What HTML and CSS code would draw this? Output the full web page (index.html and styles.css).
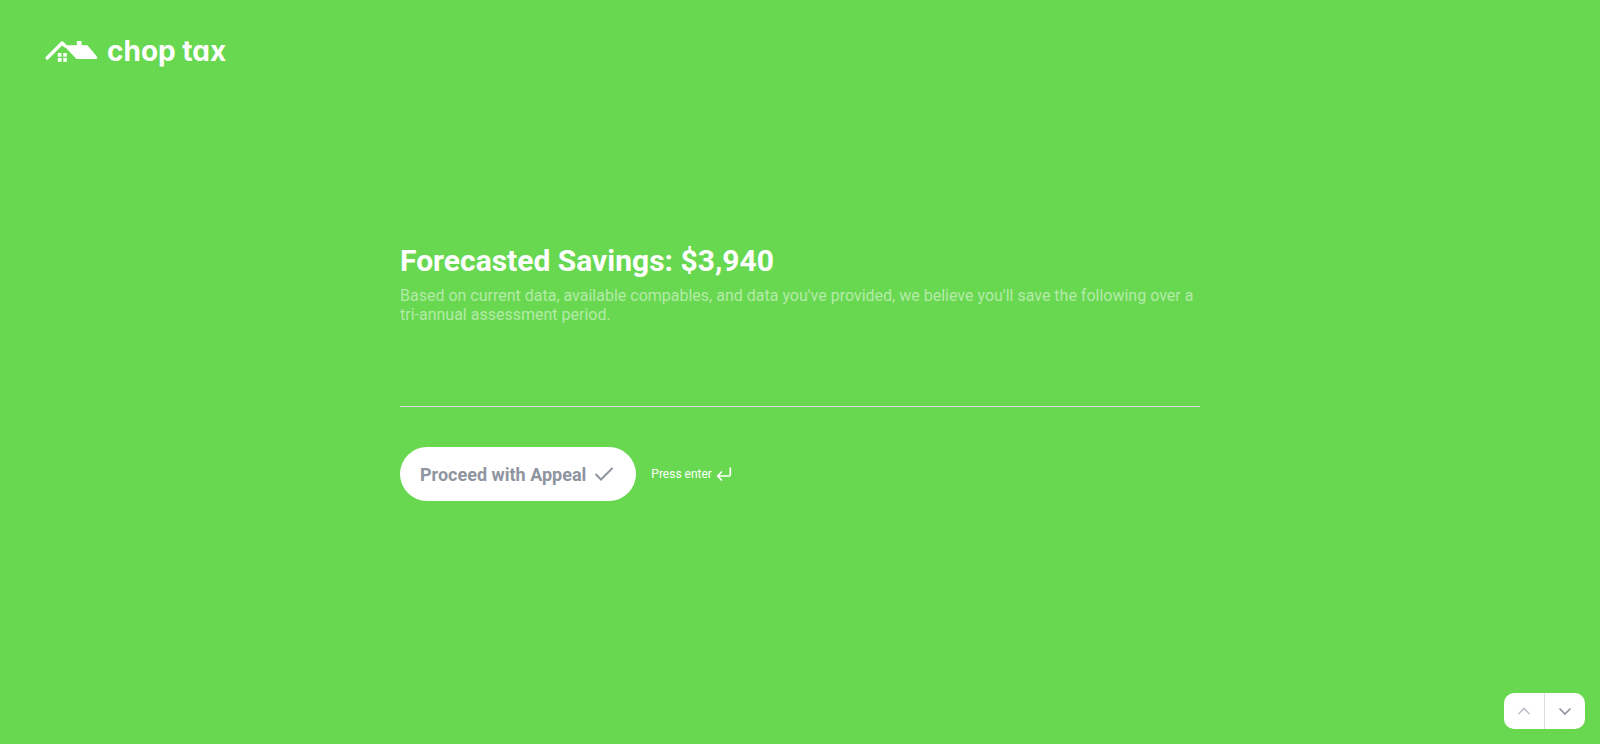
FILE: index.html
```html
<!DOCTYPE html>
<html lang="en">
<head>
  <meta charset="UTF-8">
  <title>Chop Tax - Forecasted Savings</title>
  <meta name="viewport" content="width=device-width, initial-scale=1.0">
  <link rel="stylesheet" href="styles.css">
</head>
<body>
  <header class="header">
    <a class="logo" href="#">
      <svg class="logo-icon" viewBox="0 0 156 66" aria-hidden="true">
        <path d="M5 54 L50 9 L58 17" fill="none" stroke="#fff" stroke-width="10" stroke-linecap="round" stroke-linejoin="round"/>
        <path d="M50 4 L62 16 H94 V3 H108 V16 H126 L155 51 Q157 57 151 57 H93 L50 12 Z" fill="#fff"/>
        <path d="M37 39h11v11h-11z M53 39h11v11h-11z M37 54h11v11h-11z M53 54h11v11h-11z" fill="#fff"/>
      </svg>
      <span class="logo-text">chop tax</span>
    </a>
  </header>

  <main class="question">
    <h1 class="title">Forecasted Savings: $3,940</h1>
    <p class="description">Based on current data, available compables, and data you've provided, we believe you'll save the following over a tri-annual assessment period.</p>
    <hr class="divider">
    <div class="actions">
      <button class="btn-submit" type="button">
        Proceed with Appeal
        <svg width="20" height="20" viewBox="0 0 20 20" aria-hidden="true">
          <path d="M1.5 10 L7 15.5 L18.5 4" fill="none" stroke="currentColor" stroke-width="2"/>
        </svg>
      </button>
      <span class="hint">
        Press enter
        <svg width="16" height="16" viewBox="0 0 16 16" aria-hidden="true">
          <path d="M14.3 1.5 V8.5 Q14.3 10 12.8 10 H2 M6 5.5 L1.7 10 L6 14.5" fill="none" stroke="currentColor" stroke-width="1.7"/>
        </svg>
      </span>
    </div>
  </main>

  <footer class="footer">
    <nav class="pager">
      <button class="btn-nav" type="button" aria-label="Previous" disabled>
        <svg width="14" height="14" viewBox="0 0 14 14" aria-hidden="true">
          <path d="M1.5 10 L7 4.5 L12.5 10" fill="none" stroke="currentColor" stroke-width="1.7"/>
        </svg>
      </button>
      <button class="btn-nav" type="button" aria-label="Next">
        <svg width="14" height="14" viewBox="0 0 14 14" aria-hidden="true">
          <path d="M1.5 4.5 L7 10 L12.5 4.5" fill="none" stroke="currentColor" stroke-width="1.7"/>
        </svg>
      </button>
    </nav>
  </footer>
</body>
</html>
```
FILE: styles.css
```css
* {
  box-sizing: border-box;
}
body {
  background-color: #68d850;
  color: #fff;
  display: grid;
  grid-template-rows: 1fr auto 1fr;
  min-height: 100vh;
  margin: 0;
  font-family: Roboto, "Liberation Sans", sans-serif;
}
.header {
  padding: 33px 45px;
}
.logo {
  display: inline-flex;
  align-items: center;
  gap: 9px;
  color: #fff;
  text-decoration: none;
}
.logo-icon {
  width: 53px;
  height: 22px;
}
.logo-text {
  font-family: Inter, Lato, sans-serif;
  font-feature-settings: "cv11";
  font-size: 28px;
  font-weight: 700;
  line-height: 36px;
}
.question {
  width: 50%;
  margin: 0 auto;
}
.title {
  margin: 0 0 8px;
  font-size: 30px;
  font-weight: 700;
  line-height: 35px;
}
.description {
  margin: 0;
  color: rgba(255,255,255,0.5);
  font-size: 16px;
  line-height: 19px;
}
.divider {
  margin: 82px 0 40px;
  border: none;
  border-top: 1px solid #dcdce0;
}
.actions {
  display: flex;
  align-items: center;
  gap: 15px;
}
.btn-submit {
  display: flex;
  align-items: center;
  gap: 8px;
  height: 54px;
  padding: 0 22px 0 20px;
  border: none;
  border-radius: 27px;
  background-color: #fff;
  color: #8f959f;
  font-family: inherit;
  font-size: 18px;
  font-weight: 700;
  cursor: pointer;
}
.hint {
  display: flex;
  align-items: center;
  gap: 4px;
  font-size: 12px;
}
.footer {
  display: flex;
  justify-content: flex-end;
  align-items: flex-end;
  padding: 15px;
}
.pager {
  display: flex;
  overflow: hidden;
  border-radius: 10px;
  background-color: #fff;
}
.btn-nav {
  display: flex;
  justify-content: center;
  align-items: center;
  width: 40px;
  height: 36px;
  padding: 0;
  border: none;
  background-color: transparent;
  color: #8f959f;
  cursor: pointer;
}
.btn-nav + .btn-nav {
  width: 41px;
  border-left: 1px solid #dcdce0;
}
.btn-nav:disabled {
  color: #bfc2c9;
  cursor: default;
}
```
